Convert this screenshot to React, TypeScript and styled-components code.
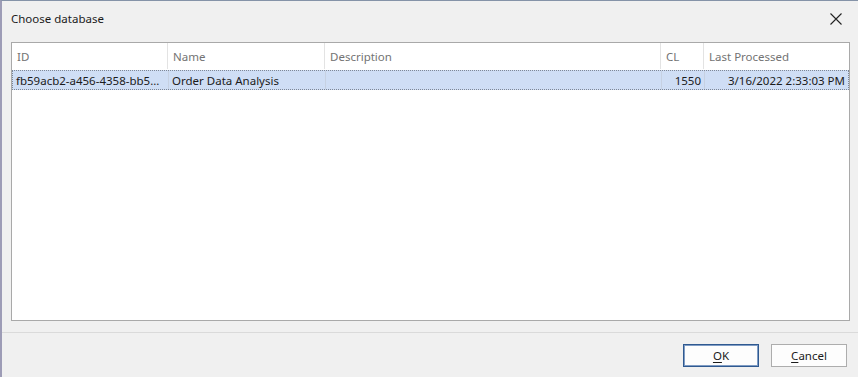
import styled, { createGlobalStyle } from "styled-components";

const GlobalStyle = createGlobalStyle`
  html, body {
    margin: 0;
    padding: 0;
    background: #f0f0f0;
  }
  body {
    font-family: "Noto Sans", "Segoe UI", sans-serif;
    font-size: 11.5px;
    color: #1b1b1b;
  }
`;

const Dialog = styled.div`
  display: flex;
  flex-direction: column;
  width: 858px;
  height: 377px;
  box-sizing: border-box;
  border-top: 1px solid #8593a8;
  border-left: 2px solid #9d9cb6;
  background: #f0f0f0;
  overflow: hidden;
`;

const TitleBar = styled.div`
  display: flex;
  align-items: center;
  justify-content: space-between;
  height: 35px;
  padding: 0 14px 0 9px;
  flex-shrink: 0;
`;

const Title = styled.span`
  font-size: 11.5px;
  color: #1b1b1b;
`;

const CloseButton = styled.button`
  display: flex;
  align-items: center;
  justify-content: center;
  width: 16px;
  height: 16px;
  padding: 0;
  border: none;
  background: transparent;
  cursor: pointer;
`;

const Body = styled.div`
  flex: 1;
  display: flex;
  padding: 6px 8px 11px 9px;
  border-bottom: 1px solid #dadada;
`;

const ListBox = styled.div`
  flex: 1;
  display: flex;
  flex-direction: column;
  background: #ffffff;
  border: 1px solid #a9a9a9;
`;

const columns = "156px 157px 336px 43px 1fr";

const HeaderRow = styled.div`
  display: grid;
  grid-template-columns: ${columns};
  height: 26px;
`;

const HeaderCell = styled.div<{ $last?: boolean }>`
  display: flex;
  align-items: center;
  padding-left: 5px;
  color: #737373;
  border-right: ${(p) => (p.$last ? "none" : "1px solid #e3e3e3")};
`;

const DataRow = styled.div<{ $selected?: boolean }>`
  display: grid;
  grid-template-columns: ${columns};
  height: 18px;
  margin-top: 1px;
  background: ${(p) => (p.$selected ? "#cfdef5" : "transparent")};
  border: 1px dotted ${(p) => (p.$selected ? "#7e8796" : "transparent")};
`;

const DataCell = styled.div<{ $right?: boolean; $last?: boolean }>`
  display: flex;
  align-items: center;
  justify-content: ${(p) => (p.$right ? "flex-end" : "flex-start")};
  padding: 0 ${(p) => (p.$right ? "3px" : "0")} 0 ${(p) => (p.$right ? "0" : "3px")};
  white-space: nowrap;
  overflow: hidden;
  color: #1b1b1b;
  border-right: ${(p) => (p.$last ? "none" : "1px solid #c6d1e2")};
`;

const Footer = styled.div`
  display: flex;
  justify-content: flex-end;
  gap: 12px;
  height: 44px;
  padding: 11px 11px 0 0;
  box-sizing: border-box;
  flex-shrink: 0;
`;

const Button = styled.button<{ $default?: boolean }>`
  width: 76px;
  height: 23px;
  box-sizing: border-box;
  font-family: "Noto Sans", "Segoe UI", sans-serif;
  font-size: 11.5px;
  color: #1b1b1b;
  background: #fdfdfd;
  border: 1px solid ${(p) => (p.$default ? "#2f5990" : "#adadad")};
  box-shadow: ${(p) => (p.$default ? "inset 0 0 0 1px #7f9cc4" : "none")};
  padding: 0;
  cursor: pointer;

  u {
    text-decoration: underline;
    text-underline-offset: 2px;
  }
`;

const rows = [
  {
    id: "fb59acb2-a456-4358-bb5...",
    name: "Order Data Analysis",
    description: "",
    cl: "1550",
    processed: "3/16/2022 2:33:03 PM",
  },
];

export default function App() {
  return (
    <>
      <GlobalStyle />
      <Dialog>
        <TitleBar>
          <Title>Choose database</Title>
          <CloseButton aria-label="Close">
            <svg width="12" height="12" viewBox="0 0 12 12">
              <path d="M0.5 0.5 L11.5 11.5 M11.5 0.5 L0.5 11.5" stroke="#222" strokeWidth="1.1" />
            </svg>
          </CloseButton>
        </TitleBar>
        <Body>
          <ListBox>
            <HeaderRow>
              <HeaderCell>ID</HeaderCell>
              <HeaderCell>Name</HeaderCell>
              <HeaderCell>Description</HeaderCell>
              <HeaderCell>CL</HeaderCell>
              <HeaderCell $last>Last Processed</HeaderCell>
            </HeaderRow>
            {rows.map((r) => (
              <DataRow key={r.id} $selected>
                <DataCell>{r.id}</DataCell>
                <DataCell>{r.name}</DataCell>
                <DataCell>{r.description}</DataCell>
                <DataCell $right>{r.cl}</DataCell>
                <DataCell $right $last>{r.processed}</DataCell>
              </DataRow>
            ))}
          </ListBox>
        </Body>
        <Footer>
          <Button $default>
            <u>O</u>K
          </Button>
          <Button>
            <u>C</u>ancel
          </Button>
        </Footer>
      </Dialog>
    </>
  );
}
